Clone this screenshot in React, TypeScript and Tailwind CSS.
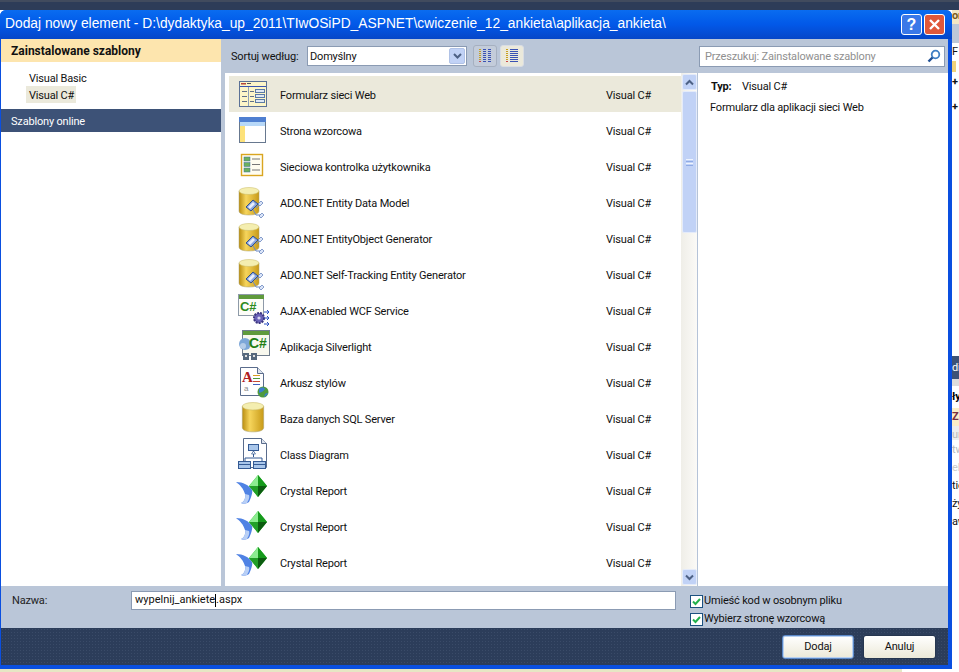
const items = [
  { name: "Formularz sieci Web", icon: "form" },
  { name: "Strona wzorcowa", icon: "master" },
  { name: "Sieciowa kontrolka użytkownika", icon: "control" },
  { name: "ADO.NET Entity Data Model", icon: "model" },
  { name: "ADO.NET EntityObject Generator", icon: "model" },
  { name: "ADO.NET Self-Tracking Entity Generator", icon: "model" },
  { name: "AJAX-enabled WCF Service", icon: "wcf" },
  { name: "Aplikacja Silverlight", icon: "silver" },
  { name: "Arkusz stylów", icon: "css" },
  { name: "Baza danych SQL Server", icon: "db" },
  { name: "Class Diagram", icon: "class" },
  { name: "Crystal Report", icon: "crystal" },
  { name: "Crystal Report", icon: "crystal" },
  { name: "Crystal Report", icon: "crystal" },
];

function DbShape() {
  return (
    <>
      <defs>
        <linearGradient id="gold" x1="0" x2="1" y1="0" y2="0">
          <stop offset="0" stopColor="#b98d10" />
          <stop offset="0.35" stopColor="#f6d55c" />
          <stop offset="1" stopColor="#c89a18" />
        </linearGradient>
      </defs>
      <path d="M1 5v20c0 3 5 4 10 4s10-1 10-4V5z" fill="url(#gold)" stroke="#a9a070" strokeWidth="0.5" />
      <ellipse cx="11" cy="5" rx="10" ry="3.5" fill="#f4eeb0" stroke="#c9b860" strokeWidth="0.5" />
    </>
  );
}

function ItemIcon({ type }: { type: string }) {
  if (type === "form")
    return (
      <svg width="32" height="32" viewBox="0 0 32 32">
        <rect x="1.5" y="3.5" width="27" height="25" fill="#fdf6c8" stroke="#5b7196" />
        <rect x="3" y="5" width="5" height="1.5" fill="#b5473a" />
        <rect x="9" y="5" width="4" height="1" fill="#555" />
        <rect x="2" y="8" width="26" height="1" fill="#3a55b0" />
        <path d="M10.5 9v19" stroke="#8ea0b8" />
        <path d="M4 13.5h5M4 18.5h5M4 23.5h5M12 13.5h4M12 18.5h4M12 23.5h4" stroke="#60708a" />
        <rect x="17.5" y="11.5" width="9" height="3" fill="#dfe8f4" stroke="#5b7ba6" />
        <rect x="17.5" y="16.5" width="9" height="3" fill="#dfe8f4" stroke="#5b7ba6" />
        <rect x="17.5" y="21.5" width="9" height="3" fill="#dfe8f4" stroke="#5b7ba6" />
      </svg>
    );
  if (type === "master")
    return (
      <svg width="32" height="32" viewBox="0 0 32 32">
        <rect x="1.5" y="3.5" width="26" height="25" fill="#fff" stroke="#67788f" />
        <rect x="1" y="3" width="27" height="5" fill="#4f7fd0" />
        <rect x="2" y="8" width="25" height="4" fill="#b7d8f8" />
        <rect x="2" y="12" width="5" height="16" fill="#fde27a" />
      </svg>
    );
  if (type === "control")
    return (
      <svg width="32" height="32" viewBox="0 0 32 32">
        <rect x="3.5" y="4.5" width="21" height="21" fill="#fffdf0" stroke="#d9a520" strokeWidth="1.4" />
        <rect x="6" y="7" width="6" height="4" fill="#6cb05c" stroke="#3b6fa0" strokeWidth="0.5" />
        <rect x="6" y="12.5" width="6" height="4" fill="#6cb05c" stroke="#3b6fa0" strokeWidth="0.5" />
        <rect x="6" y="18" width="6" height="4" fill="#6cb05c" stroke="#3b6fa0" strokeWidth="0.5" />
        <path d="M14 9h8M14 14.5h8M14 20h8" stroke="#777" />
      </svg>
    );
  if (type === "model")
    return (
      <svg width="32" height="32" viewBox="0 0 32 32">
        <DbShape />
        <path d="M14 22l4 7h6M21 19l-3 3" stroke="#6a8ac8" fill="none" />
        <path d="M8 21l7-7 5 4-7 7z" fill="#8aa6e0" stroke="#2f4f90" />
        <path d="M10 21l5-5 2 2-5 5z" fill="#e8eefb" />
        <path d="M20 18l3-3 2 2-3 3z" fill="#dbe5f8" stroke="#5a7ab8" strokeWidth="0.7" />
        <path d="M21 30l3-3 2 2-3 3z" fill="#dbe5f8" stroke="#5a7ab8" strokeWidth="0.7" />
      </svg>
    );
  if (type === "wcf")
    return (
      <svg width="32" height="32" viewBox="0 0 32 32">
        <rect x="0.5" y="0.5" width="25" height="21" fill="#fdfdf8" stroke="#8e9aa8" />
        <rect x="1" y="1" width="25" height="4" fill="#5f9a3c" />
        <text x="2" y="17" fontFamily="Liberation Sans, sans-serif" fontWeight="700" fontSize="13" fill="#2e8b1e">C#</text>
        <circle cx="21" cy="24" r="5" fill="#6a62b8" stroke="#3c3680" strokeWidth="2" strokeDasharray="2 1" />
        <circle cx="21" cy="24" r="1.6" fill="#d8d6f4" />
        <path d="M26 18l4 0M26 24l5 0M26 30l4 0M29 16l2 2-2 2M29 22l2 2-2 2M29 28l2 2-2 2" stroke="#2a4fc0" fill="none" />
      </svg>
    );
  if (type === "silver")
    return (
      <svg width="32" height="32" viewBox="0 0 32 32">
        <rect x="4.5" y="0.5" width="27" height="25" fill="#f8f8ee" stroke="#6f7c8c" />
        <rect x="5" y="1" width="26" height="4" fill="#5f9a3c" />
        <circle cx="7" cy="14" r="6" fill="#7da7d8" />
        <circle cx="5" cy="16" r="3" fill="#b6cde8" />
        <text x="11" y="18" fontFamily="Liberation Sans, sans-serif" fontWeight="700" fontSize="14" fill="#1f7f14">C#</text>
        <rect x="5" y="23" width="6" height="7" fill="#55687c" />
        <rect x="13" y="23" width="6" height="7" fill="#55687c" />
        <rect x="7" y="25" width="2" height="2" fill="#ddd" />
        <rect x="15" y="25" width="2" height="2" fill="#ddd" />
      </svg>
    );
  if (type === "css")
    return (
      <svg width="32" height="32" viewBox="0 0 32 32">
        <path d="M2.5 1.5h17l6 6v22h-23z" fill="#fff" stroke="#5a6c8c" />
        <path d="M19.5 1.5v6h6" fill="#dde4ee" stroke="#5a6c8c" />
        <text x="4" y="16" fontFamily="Liberation Serif, serif" fontWeight="700" fontSize="15" fill="#b02020">A</text>
        <text x="6" y="25" fontFamily="Liberation Sans, sans-serif" fontSize="8" fill="#8a8a8a">a</text>
        <path d="M15 9.5h7" stroke="#d9a020" />
        <path d="M15 12.5h7" stroke="#4f9a3c" />
        <path d="M15 15.5h7" stroke="#c84a30" />
        <path d="M15 18.5h7" stroke="#4060c0" />
        <circle cx="25" cy="26" r="5.5" fill="#4f9a3c" />
        <path d="M21 23c2-2 5-2 6 0-1 2-3 3-6 4zM27 28c1-1 2-1 3-1-1 2-2 3-4 4z" fill="#3a7fd0" />
      </svg>
    );
  if (type === "db")
    return (
      <svg width="32" height="32" viewBox="-1 1 24 30" className="-ml-px">
        <DbShape />
      </svg>
    );
  if (type === "class")
    return (
      <svg width="32" height="32" viewBox="0 0 32 32">
        <path d="M5.5 0.5h18l5 5v24h-23z" fill="#fff" stroke="#5a6c8c" />
        <path d="M23.5 0.5v5h5" fill="#dde4ee" stroke="#5a6c8c" />
        <rect x="10.5" y="6.5" width="10" height="6" fill="#a9c6ea" stroke="#345a94" />
        <path d="M15.5 13v6M7 24v-4h17v4" stroke="#345a94" fill="none" />
        <path d="M13.5 16h4l-2-3z" fill="#fff" stroke="#345a94" strokeWidth="0.7" />
        <rect x="0.5" y="23.5" width="12" height="7" fill="#a9c6ea" stroke="#345a94" />
        <rect x="15.5" y="23.5" width="12" height="7" fill="#a9c6ea" stroke="#345a94" />
        <path d="M1 26.5h11M16 26.5h11" stroke="#345a94" />
      </svg>
    );
  return (
    <svg width="32" height="32" viewBox="0 0 32 32" className="-ml-[2px]">
      <path d="M0 8c7 0 13 3 16 8 1 2-1 8-3 12-3 2-6 2-8 1 3-1 5-5 4-9C7 14 4 11 0 8z" fill="#4f82e4" />
      <path d="M5 29c3-1 5-5 4-9l4 1c1 3-1 6-2 8-3 1-4 1-6 0z" fill="#b8cff6" />
      <path d="M22 1l9 11-9 11-9-11z" fill="#2cb530" />
      <path d="M22 1l-9 11h9z" fill="#8cec90" />
      <path d="M22 1l9 11h-9z" fill="#169a1c" />
      <path d="M22 23l9-11h-9z" fill="#0c5c10" />
      <path d="M22 23l-9-11h9z" fill="#22a028" />
    </svg>
  );
}

function Check({ label }: { label: string }) {
  return (
    <div className="flex items-center h-[18px]">
      <div className="w-[13px] h-[13px] border border-[#1c5180] bg-white flex items-center justify-center">
        <svg width="9" height="9" viewBox="0 0 9 9">
          <path d="M1 4.5l2.5 2.5 4.5-5" stroke="#22b14c" strokeWidth="2" fill="none" />
        </svg>
      </div>
      <span className="ml-px">{label}</span>
    </div>
  );
}

function ViewButton({ active, tall }: { active?: boolean; tall?: boolean }) {
  return (
    <div className={`w-[24px] h-[22px] rounded-[3px] border flex items-center justify-center ${active ? "bg-[#ebe9db] border-[#d9dde4]" : "bg-[#c3ccda] border-[#a6b0c0]"}`}>
      <svg width="14" height="14" viewBox="0 0 14 14">
        {[0, 2, 4, 6, 8, 10, 12].map((y) => (
          <g key={y}>
            <path d={`M1 ${y + 0.5}h2`} stroke={y === 12 ? "#c44" : "#c9a020"} />
            <path d={tall ? `M5 ${y + 0.5}h8` : `M5 ${y + 0.5}h3M10 ${y + 0.5}h3`} stroke="#3a52b4" />
          </g>
        ))}
      </svg>
    </div>
  );
}

export default function App() {
  return (
    <div className="w-[959px] h-[672px] overflow-hidden bg-white text-[#111] text-[11px] tracking-[-0.18px] whitespace-nowrap font-['Roboto',sans-serif] flex flex-col">
      <div className="h-[10px] shrink-0 bg-[#2d3c58] border-t-2 border-[#414b5e]"></div>
      <div className="flex h-[659px] shrink-0">
        {/* dialog */}
        <div className="w-[952px] shrink-0 flex flex-col bg-[#0a4fe0] rounded-t-[6px] pl-px pr-[4px] pb-[4px]">
          <div className="h-[29px] shrink-0 -ml-px -mr-[4px] rounded-t-[6px] bg-gradient-to-b from-[#0a6cf0] via-[#0258e8] to-[#0546c8] flex items-center pl-[5px] pr-[7px] text-white text-[13.8px] tracking-normal font-['Liberation_Sans',sans-serif]">
            <div className="flex-1 truncate">{"Dodaj nowy element - D:\\dydaktyka_up_2011\\TIwOSiPD_ASPNET\\cwiczenie_12_ankieta\\aplikacja_ankieta\\"}</div>
            <div className="w-[21px] h-[21px] rounded-[3px] border border-white bg-[#3a78e8] flex items-center justify-center font-bold text-[16px] mr-[2px]">?</div>
            <div className="w-[21px] h-[21px] rounded-[3px] border border-white bg-[#e0583a] flex items-center justify-center">
              <svg width="13" height="13" viewBox="0 0 13 13">
                <path d="M2 2l9 9M11 2l-9 9" stroke="#fff" strokeWidth="2.4" />
              </svg>
            </div>
          </div>
          <div className="flex flex-1 min-h-0 bg-[#bac6d8]">
            {/* left panel */}
            <div className="w-[220px] shrink-0 bg-white flex flex-col">
              <div className="h-[23px] shrink-0 bg-[#fde5ae] flex items-center pl-[10px] pt-px font-bold text-[12px] tracking-normal">Zainstalowane szablony</div>
              <div className="h-[47px] shrink-0 pt-[7px] pl-[25px] flex flex-col">
                <div className="h-[17px] flex items-center pl-[3px] pt-[3px]">Visual Basic</div>
                <div className="h-[17px] w-[50px] flex items-center pl-[3px] pt-[3px] bg-[#ebe9db]">Visual C#</div>
              </div>
              <div className="h-[23px] shrink-0 bg-[#3d5277] text-white flex items-center pl-[10px] pt-[3px]">Szablony online</div>
            </div>
            <div className="flex-1 min-w-0 flex flex-col">
              {/* toolbar */}
              <div className="h-[34px] shrink-0 flex items-center pl-[10px] pr-[3px]">
                <span className="w-[76px] shrink-0 pt-[3px]">Sortuj według:</span>
                <div className="w-[160px] h-[20px] bg-white border border-[#8b9bb3] flex items-center justify-between pl-[2px] pr-px">
                  <span className="pt-[3px]">Domyślny</span>
                  <div className="w-[16px] h-[16px] rounded-[2px] bg-[#c1d2f6] border border-[#b0c2e6] flex items-center justify-center">
                    <svg width="9" height="7" viewBox="0 0 9 7">
                      <path d="M1 1l3.5 3.5L8 1" stroke="#4d6185" strokeWidth="2" fill="none" />
                    </svg>
                  </div>
                </div>
                <div className="ml-[6px] flex gap-[3px]">
                  <ViewButton />
                  <ViewButton active tall />
                </div>
                <div className="ml-auto w-[246px] h-[21px] bg-white border border-[#8b9bb3] flex items-center justify-between pl-[5px] pr-[3px] text-[#8f8f8f]">
                  <span className="pt-[3px]">Przeszukuj: Zainstalowane szablony</span>
                  <svg width="14" height="14" viewBox="0 0 14 14">
                    <circle cx="8.5" cy="5.5" r="3.8" fill="none" stroke="#3f7fc4" strokeWidth="1.8" />
                    <path d="M5.5 8.5l-4 4" stroke="#1f4f94" strokeWidth="2.4" />
                  </svg>
                </div>
              </div>
              {/* list and details */}
              <div className="flex-1 min-h-0 flex pl-[4px]">
                <div className="w-[456px] shrink-0 bg-white pt-[3px] pl-[4px] overflow-hidden">
                  {items.map((item, i) => (
                    <div key={i} className={`h-[36px] flex items-center pl-[9px] ${i === 0 ? "bg-[#ebe9db]" : ""}`}>
                      <div className="w-[32px] h-[32px] shrink-0">
                        <ItemIcon type={item.icon} />
                      </div>
                      <span className="ml-[10px] w-[326px] shrink-0 pt-[5px]">{item.name}</span>
                      <span className="pt-[5px]">Visual C#</span>
                    </div>
                  ))}
                </div>
                {/* scrollbar */}
                <div className="w-[17px] shrink-0 bg-gradient-to-r from-[#efeee8] to-[#fbfaf7] border-r border-[#b5c3d8] flex flex-col items-center pr-px pl-[1px] pt-px">
                  <div className="w-[15px] h-[16px] rounded-[2px] bg-[#c1d2f6] border border-[#e4ebfa] flex items-center justify-center">
                    <svg width="9" height="7" viewBox="0 0 9 7">
                      <path d="M1 5.5L4.5 2 8 5.5" stroke="#4d6185" strokeWidth="2" fill="none" />
                    </svg>
                  </div>
                  <div className="mt-[1px] w-[15px] h-[142px] rounded-[2px] bg-[#c1d2f6] border border-[#e4ebfa] flex flex-col items-center justify-center gap-px">
                    <div className="w-[7px] h-px bg-[#eef3fd]"></div>
                    <div className="w-[7px] h-px bg-[#8fabe6]"></div>
                    <div className="w-[7px] h-px bg-[#eef3fd]"></div>
                    <div className="w-[7px] h-px bg-[#8fabe6]"></div>
                  </div>
                  <div className="mt-auto mb-px w-[15px] h-[16px] rounded-[2px] bg-[#c1d2f6] border border-[#e4ebfa] flex items-center justify-center">
                    <svg width="9" height="7" viewBox="0 0 9 7">
                      <path d="M1 1.5L4.5 5 8 1.5" stroke="#4d6185" strokeWidth="2" fill="none" />
                    </svg>
                  </div>
                </div>
                <div className="flex-1 bg-white pl-[12px] pt-[6px]">
                  <div className="h-[16px] flex items-center">
                    <b className="w-[32px] pl-px">Typ:</b>
                    <span>Visual C#</span>
                  </div>
                  <div className="mt-[5px] h-[16px] flex items-center">Formularz dla aplikacji sieci Web</div>
                </div>
              </div>
            </div>
          </div>
          {/* name row */}
          <div className="h-[42px] shrink-0 bg-[#bac6d8] flex pl-[11px] pt-[5px]">
            <span className="w-[119px] shrink-0 h-[19px] flex items-center pt-px text-[#222]">Nazwa:</span>
            <div className="w-[545px] h-[19px] bg-white border border-[#8b9bb3] flex items-center pl-[3px] tracking-normal">
              <span>wypelnij_ankiete</span>
              <span className="w-px h-[13px] bg-black"></span>
              <span>.aspx</span>
            </div>
            <div className="ml-[14px] flex flex-col mt-[1px]">
              <Check label="Umieść kod w osobnym pliku" />
              <Check label="Wybierz stronę wzorcową" />
            </div>
          </div>
          {/* footer */}
          <div className="h-[37px] shrink-0 bg-[#2c3d5a] bg-[radial-gradient(#3a4b68_1px,transparent_1px)] bg-[size:3px_3px] flex items-start justify-end pt-[7px] pr-[12px] gap-[9px]">
            <div className="w-[72px] h-[24px] rounded-[3px] bg-gradient-to-b from-white to-[#ece9d8] border border-[#5a88c8] shadow-[inset_0_0_0_1px_#b8d0f0] flex items-center justify-center">Dodaj</div>
            <div className="w-[73px] h-[24px] rounded-[3px] bg-gradient-to-b from-white to-[#ece9d8] border border-[#26364f] flex items-center justify-center">Anuluj</div>
          </div>
        </div>
        {/* what shows of the IDE behind the dialog */}
        <div className="flex-1 min-w-0 overflow-hidden flex flex-col text-[11px] leading-none font-bold">
          <div className="h-[14px] shrink-0 bg-[#f3e7c4] text-[#7a5a20]">or</div>
          <div className="h-[19px] shrink-0 bg-[#bcc7d8]"></div>
          <div className="h-[18px] shrink-0 pt-[3px] font-normal">F</div>
          <div className="h-[11px] w-[4px] shrink-0 bg-[#f0d27c]"></div>
          <div className="h-[21px] shrink-0 pt-[4px]">+</div>
          <div className="h-[21px] shrink-0 pt-[8px]">+</div>
          <div className="h-[242px] shrink-0"></div>
          <div className="h-[23px] shrink-0 bg-[#3d5277] text-white font-normal pt-[6px]">di</div>
          <div className="h-[7px] shrink-0 bg-[#dcdcdc]"></div>
          <div className="h-[22px] shrink-0 pt-[5px] text-black">ły</div>
          <div className="h-[18px] shrink-0 bg-[#fbeec8] text-[#7a3040] pt-[3px]">Z</div>
          <div className="h-[14px] shrink-0 bg-[#eeeeee] text-[#bbb] font-normal pt-[3px]">ur</div>
          <div className="h-[18px] shrink-0 text-[#bbb] font-normal pt-[4px]">tw</div>
          <div className="h-[18px] shrink-0 text-[#ccc] font-normal pt-[4px]">eh</div>
          <div className="h-[18px] shrink-0 font-normal pt-[4px]">tie</div>
          <div className="h-[18px] shrink-0 font-normal pt-[4px]">ży</div>
          <div className="h-[18px] shrink-0 font-normal pt-[4px]">aw</div>
        </div>
      </div>
      <div className="h-[3px] shrink-0 w-[902px] bg-[#e6e6c4]"></div>
    </div>
  );
}
